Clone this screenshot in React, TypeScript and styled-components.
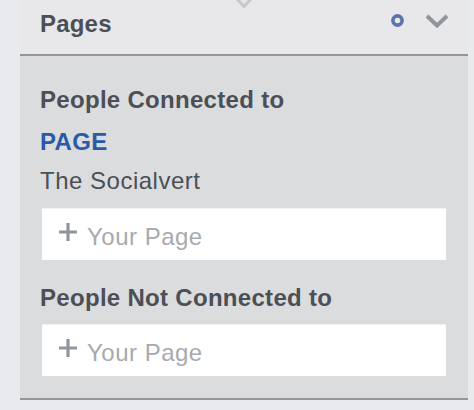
import * as React from "react";
import styled, { createGlobalStyle } from "styled-components";

const GlobalStyle = createGlobalStyle`
  html, body {
    margin: 0;
    padding: 0;
    background: #e9eaee;
    font-family: "Liberation Sans", Arial, Helvetica, sans-serif;
  }
`;

type Section = {
  title: string;
  link?: string;
  name?: string;
  placeholder: string;
};

const sections: Section[] = [
  {
    title: "People Connected to",
    link: "PAGE",
    name: "The Socialvert",
    placeholder: "Your Page",
  },
  { title: "People Not Connected to", placeholder: "Your Page" },
];

export default function App() {
  return (
    <>
      <GlobalStyle />
      <Page>
        <Panel>
          <Header>
            <TopArrow viewBox="0 0 20 10" width={20} height={10}>
              <path d="M3 -1 L10 6.5 L17 -1" />
            </TopArrow>
            <HeaderTitle>Pages</HeaderTitle>
            <HeaderTools>
              <svg width="15" height="15" viewBox="0 0 15 15">
                <circle cx="7.5" cy="7.5" r="4.6" fill="none" stroke="#5a74ae" strokeWidth="3.6" />
              </svg>
              <Chevron viewBox="0 0 24 14" width={24} height={14}>
                <path d="M2 2 L12 11.5 L22 2" />
              </Chevron>
            </HeaderTools>
          </Header>
          <Body>
            {sections.map((s, i) => (
              <Group key={i} $first={i === 0}>
                <Heading>{s.title}</Heading>
                {s.link && <Link>{s.link}</Link>}
                {s.name && <Name>{s.name}</Name>}
                <AddBox $tight={!s.name}>
                  <Plus viewBox="0 0 20 20" width={20} height={20}>
                    <path d="M10 1 V19 M1 10 H19" />
                  </Plus>
                  <Placeholder>{s.placeholder}</Placeholder>
                </AddBox>
              </Group>
            ))}
          </Body>
        </Panel>
      </Page>
    </>
  );
}

const Page = styled.div`
  width: 474px;
  height: 410px;
  padding-left: 20px;
  padding-right: 6px;
  box-sizing: border-box;
  overflow: hidden;
`;

const Panel = styled.div`
  width: 448px;
  display: flex;
  flex-direction: column;
`;

const Header = styled.div`
  position: relative;
  height: 56px;
  box-sizing: border-box;
  padding: 10px 19px 0 20px;
  display: flex;
  align-items: flex-start;
  justify-content: space-between;
  background: #e8e8eb;
  border-bottom: 2px solid #959595;
`;

const TopArrow = styled.svg`
  position: absolute;
  top: 0;
  left: 50%;
  transform: translateX(-50%);
  fill: none;
  stroke: #c5c7cb;
  stroke-width: 3;
`;

const HeaderTitle = styled.div`
  font-size: 24px;
  line-height: 28px;
  font-weight: 700;
  letter-spacing: 0.2px;
  color: #4b4f56;
`;

const HeaderTools = styled.div`
  display: flex;
  align-items: center;
  gap: 20px;
  margin-top: 3px;
`;

const Chevron = styled.svg`
  fill: none;
  stroke: #90949c;
  stroke-width: 4;
  stroke-linecap: butt;
  stroke-linejoin: miter;
`;

const Body = styled.div`
  background: #dbdcde;
  padding: 30px 22px 22px 20px;
  border-bottom: 2px solid #959595;
  display: flex;
  flex-direction: column;
`;

const Group = styled.div<{ $first: boolean }>`
  display: flex;
  flex-direction: column;
  margin-top: ${(p) => (p.$first ? "0" : "24px")};
`;

const Heading = styled.div`
  font-size: 24px;
  line-height: 28px;
  font-weight: 700;
  letter-spacing: 0.3px;
  color: #4b4f56;
`;

const Link = styled.div`
  margin-top: 14px;
  font-size: 24px;
  line-height: 28px;
  font-weight: 700;
  letter-spacing: 0.3px;
  color: #2a5ba6;
`;

const Name = styled.div`
  margin-top: 11px;
  font-size: 24px;
  line-height: 28px;
  letter-spacing: 0.5px;
  color: #4b4f56;
`;

const AddBox = styled.div<{ $tight: boolean }>`
  margin-top: ${(p) => (p.$tight ? "12px" : "13px")};
  margin-left: 2px;
  height: 52px;
  box-sizing: border-box;
  background: #fff;
  border-top: 1px solid #f2f2f3;
  display: flex;
  align-items: center;
  padding-left: 16px;
  gap: 9px;
`;

const Plus = styled.svg`
  fill: none;
  stroke: #90949c;
  stroke-width: 3.2;
  margin-top: -6px;
`;

const Placeholder = styled.span`
  font-size: 24px;
  line-height: 28px;
  letter-spacing: 0.5px;
  color: #a7aaaf;
  margin-top: 5px;
`;
